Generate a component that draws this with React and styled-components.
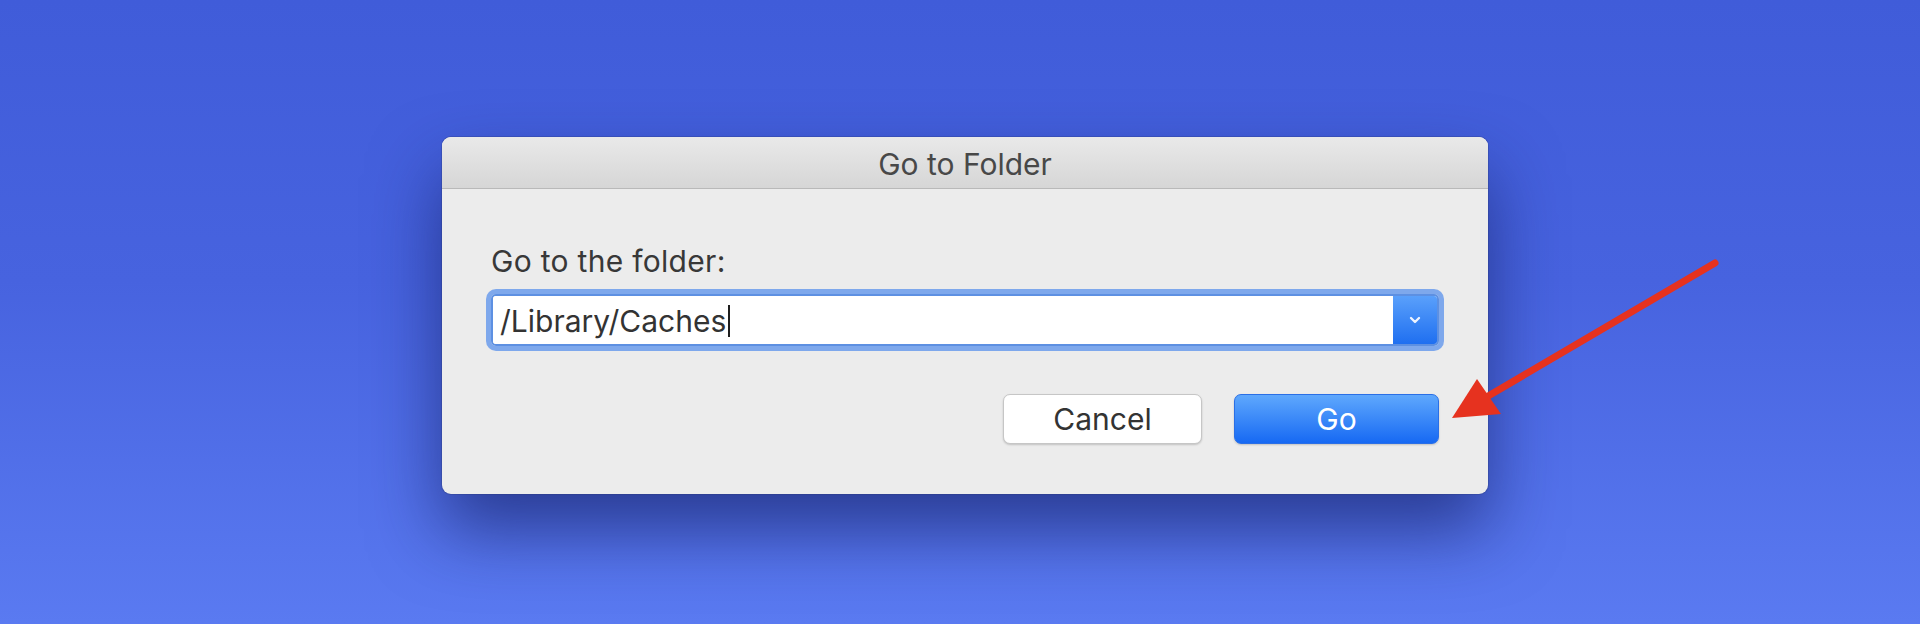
import React from 'react';
import styled, { createGlobalStyle } from 'styled-components';
import { ChevronDown } from 'lucide-react';

const GlobalStyle = createGlobalStyle`
    html, body {
        margin: 0;
        padding: 0;
        background: #4663df;
    }
`;

const Desktop = styled.div`
    position: relative;
    width: 1920px;
    height: 624px;
    box-sizing: border-box;
    padding: 137px 0 0 442px;
    overflow: hidden;
    background: linear-gradient(180deg, #405cd9 0%, #4763df 45%, #5a7af1 100%);
    font-family: Inter, "Liberation Sans", sans-serif;
`;

const Dialog = styled.div`
    width: 1046px;
    display: flex;
    flex-direction: column;
    border-radius: 9px;
    background: #ececec;
    box-shadow: 0 0 0 1px rgba(40, 50, 110, 0.25), 0 36px 70px rgba(20, 30, 100, 0.65);
    overflow: hidden;
`;

const TitleBar = styled.div`
    height: 52px;
    box-sizing: border-box;
    padding-top: 3px;
    display: flex;
    align-items: center;
    justify-content: center;
    background: linear-gradient(180deg, #e9e9e9 0%, #d6d6d6 100%);
    border-bottom: 1px solid #b9b9b9;
    color: #484848;
    font-size: 30px;
`;

const Body = styled.div`
    display: flex;
    flex-direction: column;
    padding: 55px 49px 50px 49px;
`;

const Label = styled.div`
    font-size: 30px;
    line-height: 34px;
    letter-spacing: 0.3px;
    color: #383838;
`;

const Combo = styled.div`
    margin-top: 16px;
    height: 52px;
    display: flex;
    border-radius: 5px;
    border: 2px solid #5d90e2;
    box-sizing: border-box;
    box-shadow: 0 0 0 5px #7ea8ec;
    overflow: hidden;
`;

const Field = styled.div`
    flex: 1;
    display: flex;
    align-items: center;
    padding: 2px 0 0 7px;
    background: #ffffff;
    color: #333333;
    font-size: 30px;
`;

const Caret = styled.span`
    display: inline-block;
    width: 2px;
    height: 32px;
    margin-left: 2px;
    background: #1e1e1e;
`;

const DropButton = styled.div`
    width: 44px;
    display: flex;
    align-items: center;
    justify-content: center;
    background: linear-gradient(180deg, #5aa0fb 0%, #1f6ff0 100%);
    color: #eef4ff;
`;

const Actions = styled.div`
    margin-top: 48px;
    display: flex;
    justify-content: flex-end;
    gap: 32px;
`;

const Button = styled.div`
    width: ${(p) => p.width}px;
    height: 50px;
    box-sizing: border-box;
    display: flex;
    align-items: center;
    justify-content: center;
    border-radius: 7px;
    font-size: 30px;
    color: ${(p) => (p.primary ? '#ffffff' : '#333333')};
    background: ${(p) =>
        p.primary ? 'linear-gradient(180deg, #5fa8fd 0%, #1769f3 100%)' : '#ffffff'};
    border: 1px solid ${(p) => (p.primary ? '#2a6fe6' : '#c6c6c6')};
    box-shadow: 0 1px 2px rgba(0, 0, 0, 0.18);
`;

const Arrow = styled.svg`
    position: absolute;
    left: 0;
    top: 0;
    pointer-events: none;
`;

export default function App() {
    return (
        <Desktop>
            <GlobalStyle />
            <Dialog>
                <TitleBar>Go to Folder</TitleBar>
                <Body>
                    <Label>Go to the folder:</Label>
                    <Combo>
                        <Field>
                            /Library/Caches
                            <Caret />
                        </Field>
                        <DropButton>
                            <ChevronDown size={16} strokeWidth={3.5} />
                        </DropButton>
                    </Combo>
                    <Actions>
                        <Button width={199}>Cancel</Button>
                        <Button width={205} primary>
                            Go
                        </Button>
                    </Actions>
                </Body>
            </Dialog>
            <Arrow width="1920" height="624" viewBox="0 0 1920 624">
                <line
                    x1="1715"
                    y1="263"
                    x2="1478"
                    y2="402"
                    stroke="#e6321f"
                    strokeWidth="7"
                    strokeLinecap="round"
                />
                <polygon points="1452,418 1477,379 1501,414" fill="#e6321f" />
            </Arrow>
        </Desktop>
    );
}
